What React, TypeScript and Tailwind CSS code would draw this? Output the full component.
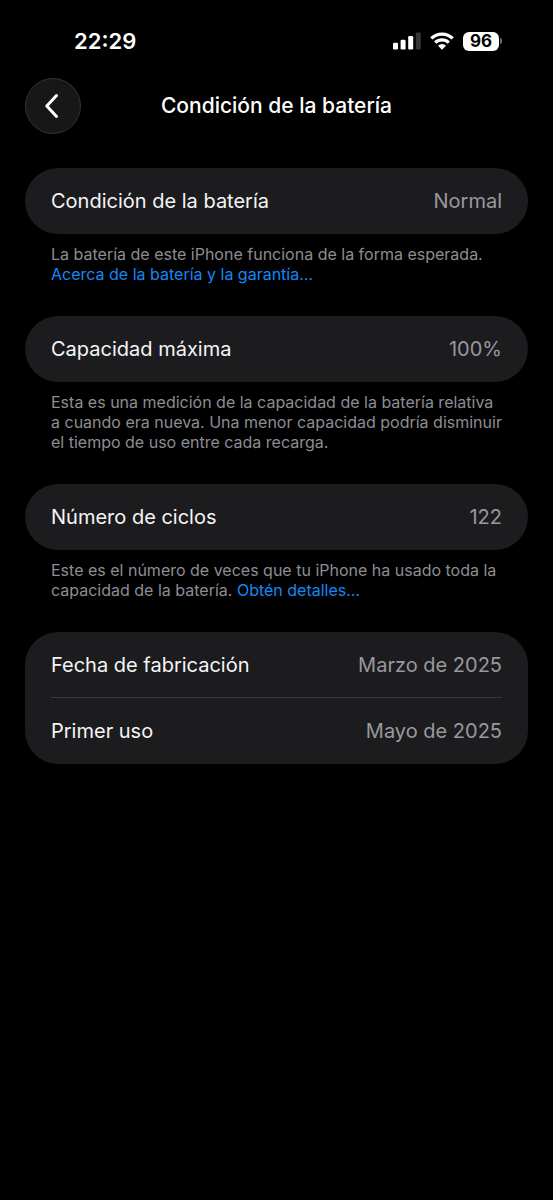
import type { ReactNode } from "react";

function SignalIcon() {
  return (
    <svg width="28" height="18" viewBox="0 0 28 18" aria-label="Señal celular" role="img">
      <rect x="0" y="10.8" width="5" height="6.7" rx="1.3" fill="#fff" />
      <rect x="7.6" y="7.8" width="5" height="9.7" rx="1.3" fill="#fff" />
      <rect x="15.2" y="4" width="5" height="13.5" rx="1.3" fill="#fff" />
      <rect x="22.8" y="0.4" width="5" height="17.1" rx="1.3" fill="#363638" />
    </svg>
  );
}

function WifiIcon() {
  return (
    <svg width="24" height="18" viewBox="0 0 24 18" aria-label="Wi-Fi" role="img">
      <g fill="none" stroke="#fff" strokeWidth="3.2">
        <path d="M1.3 6.4a15.3 15.3 0 0 1 21.4 0" />
        <path d="M5.2 10.7a9.7 9.7 0 0 1 13.6 0" />
      </g>
      <path d="M12 17.7 8 13.7a5.7 5.7 0 0 1 8 0Z" fill="#fff" />
    </svg>
  );
}

function Battery({ level }: { level: number }) {
  return (
    <div className="flex items-center gap-px">
      <div className="flex h-[19px] w-9 items-center justify-center rounded-md bg-white text-[17px] leading-5 font-bold text-black">
        {level}
      </div>
      <div className="h-[6px] w-[2px] rounded-r-full bg-[#6b6b6e]" />
    </div>
  );
}

function Row({ label, value }: { label: string; value: string }) {
  return (
    <div className="flex h-[66px] items-center justify-between gap-4 text-[20px] leading-6">
      <dt className="text-[#f5f5f7]">{label}</dt>
      <dd className="text-[#98989f]">{value}</dd>
    </div>
  );
}

function Group({ children, note }: { children: ReactNode; note?: ReactNode }) {
  return (
    <section>
      <dl className="divide-y divide-[#3a3a3c] rounded-[33px] bg-[#1c1c1e] px-[26px]">{children}</dl>
      {note && <p className="px-[26px] pt-[10px] text-[16px] leading-5 text-[#8d8d93]">{note}</p>}
    </section>
  );
}

function NoteLink({ children }: { children: ReactNode }) {
  return (
    <a href="#" className="text-[#1688f5]">
      {children}
    </a>
  );
}

export default function App() {
  return (
    <div className="min-h-screen bg-black pb-8 font-['Inter','Liberation_Sans',sans-serif] text-white">
      <div className="flex h-[78px] items-center justify-between pt-1 pr-[51px] pl-[74px]">
        <time className="text-[22px] leading-7 font-semibold">22:29</time>
        <div className="flex items-center gap-[9px]">
          <SignalIcon />
          <WifiIcon />
          <Battery level={96} />
        </div>
      </div>

      <header className="grid grid-cols-[56px_1fr_56px] items-center px-[25px]">
        <button
          type="button"
          aria-label="Atrás"
          className="flex size-14 items-center justify-center rounded-full border border-[#333333] bg-[#171717]"
        >
          <svg width="16" height="26" viewBox="0 0 16 26" fill="none" aria-hidden="true">
            <path
              d="M11.5 2.5 1.8 13l9.7 10.5"
              stroke="#fff"
              strokeWidth="3"
              strokeLinecap="round"
              strokeLinejoin="round"
            />
          </svg>
        </button>
        <h1 className="text-center text-[21px] leading-7 font-medium">Condición de la batería</h1>
      </header>

      <main className="flex flex-col gap-8 px-[25px] pt-[34px]">
        <Group
          note={
            <>
              La batería de este iPhone funciona de la forma esperada.{" "}
              <NoteLink>Acerca de la batería y la garantía…</NoteLink>
            </>
          }
        >
          <Row label="Condición de la batería" value="Normal" />
        </Group>

        <Group note="Esta es una medición de la capacidad de la batería relativa a cuando era nueva. Una menor capacidad podría disminuir el tiempo de uso entre cada recarga.">
          <Row label="Capacidad máxima" value="100%" />
        </Group>

        <Group
          note={
            <>
              Este es el número de veces que tu iPhone ha usado toda la capacidad de la batería.{" "}
              <NoteLink>Obtén detalles…</NoteLink>
            </>
          }
        >
          <Row label="Número de ciclos" value="122" />
        </Group>

        <Group>
          <Row label="Fecha de fabricación" value="Marzo de 2025" />
          <Row label="Primer uso" value="Mayo de 2025" />
        </Group>
      </main>
    </div>
  );
}
